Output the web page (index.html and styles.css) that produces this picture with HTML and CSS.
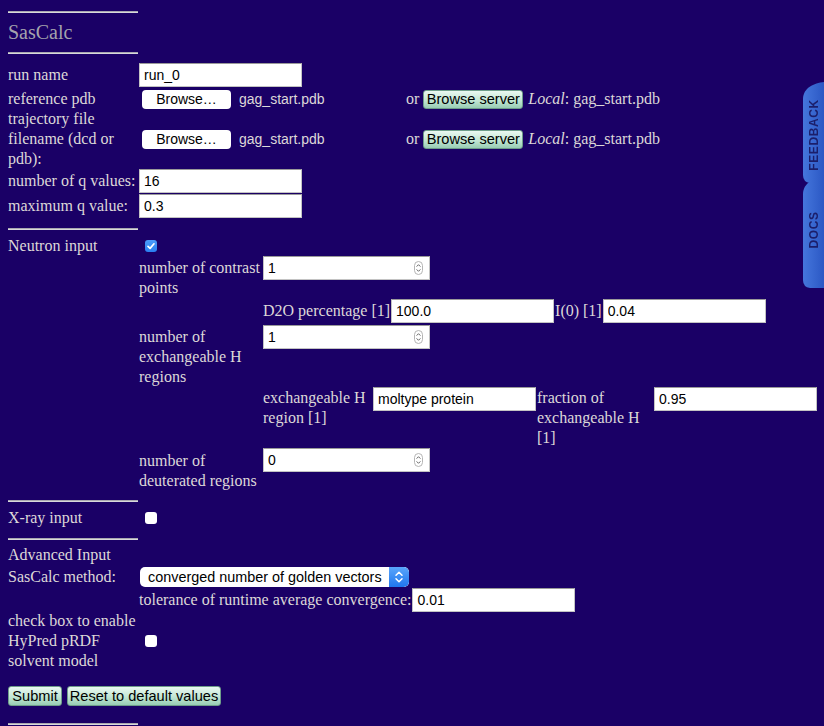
FILE: index.html
```html
<!DOCTYPE html>
<html lang="en">
<head>
<meta charset="utf-8">
<title>SasCalc</title>
<link rel="stylesheet" href="styles.css">
</head>
<body>
<div class="page">
  <div class="rule rule-top"></div>
  <div class="title">SasCalc</div>
  <div class="rule"></div>

  <form class="form">
    <div class="row row-field row-run">
      <span class="lbl">run name</span>
      <input class="field" type="text" value="run_0">
    </div>

    <div class="row row-ref">
      <span class="lbl">reference pdb</span>
      <div class="filebox">
        <div class="file"><span class="browse">Browse…</span><span class="fname">gag_start.pdb</span></div>
        <span class="or">or</span>
        <span class="gbtn server">Browse server</span>
        <span class="local"><i>Local</i>: gag_start.pdb</span>
      </div>
    </div>

    <div class="row row-traj">
      <span class="lbl">trajectory file filename (dcd or pdb):</span>
      <div class="filebox">
        <div class="file"><span class="browse">Browse…</span><span class="fname">gag_start.pdb</span></div>
        <span class="or">or</span>
        <span class="gbtn server">Browse server</span>
        <span class="local"><i>Local</i>: gag_start.pdb</span>
      </div>
    </div>

    <div class="row row-field">
      <span class="lbl">number of q values:</span>
      <input class="field" type="text" value="16">
    </div>
    <div class="row row-field">
      <span class="lbl">maximum q value:</span>
      <input class="field" type="text" value="0.3">
    </div>

    <div class="rule rule-neutron"></div>

    <div class="sect sect-neutron">
      <span class="lbl">Neutron input</span>
      <div class="sub">
        <div class="cbline"><span class="cb on"><svg width="12" height="12" viewBox="0 0 12 12"><path d="M3 6.3 L5.1 8.4 L9 3.8" fill="none" stroke="#fff" stroke-width="1.7" stroke-linecap="round" stroke-linejoin="round"/></svg></span></div>

        <div class="sub2 sub-contrast">
          <span class="lbl2">number of contrast points</span>
          <div class="spin"><input type="text" value="1"><svg class="spinner" width="9" height="14" viewBox="0 0 9 14"><rect x="0.5" y="0.5" width="8" height="13" rx="4" fill="#fff" stroke="#b4b4b4"/><path d="M2.6 5.6 L4.5 3.7 L6.4 5.6 M2.6 8.4 L4.5 10.3 L6.4 8.4" fill="none" stroke="#555" stroke-width="0.9"/></svg></div>
        </div>

        <div class="pair pair-d2o">
          <span class="plbl">D2O percentage [1]</span>
          <input class="field" type="text" value="100.0">
          <span class="plbl plbl-i0">I(0) [1]</span>
          <input class="field" type="text" value="0.04">
        </div>

        <div class="sub2 sub-exch">
          <span class="lbl2">number of exchangeable H regions</span>
          <div class="spin"><input type="text" value="1"><svg class="spinner" width="9" height="14" viewBox="0 0 9 14"><rect x="0.5" y="0.5" width="8" height="13" rx="4" fill="#fff" stroke="#b4b4b4"/><path d="M2.6 5.6 L4.5 3.7 L6.4 5.6 M2.6 8.4 L4.5 10.3 L6.4 8.4" fill="none" stroke="#555" stroke-width="0.9"/></svg></div>
        </div>

        <div class="quad">
          <span class="qlbl">exchangeable H region [1]</span>
          <input class="field" type="text" value="moltype protein">
          <span class="qlbl qlbl-frac">fraction of exchangeable H [1]</span>
          <input class="field" type="text" value="0.95">
        </div>

        <div class="sub2 sub-deut">
          <span class="lbl2">number of deuterated regions</span>
          <div class="spin"><input type="text" value="0"><svg class="spinner" width="9" height="14" viewBox="0 0 9 14"><rect x="0.5" y="0.5" width="8" height="13" rx="4" fill="#fff" stroke="#b4b4b4"/><path d="M2.6 5.6 L4.5 3.7 L6.4 5.6 M2.6 8.4 L4.5 10.3 L6.4 8.4" fill="none" stroke="#555" stroke-width="0.9"/></svg></div>
        </div>
      </div>
    </div>

    <div class="rule rule-xray"></div>
    <div class="row row-xray">
      <span class="lbl">X-ray input</span>
      <span class="cb off"></span>
    </div>
    <div class="rule rule-adv"></div>

    <div class="adv-title">Advanced Input</div>
    <div class="row row-method">
      <span class="lbl">SasCalc method:</span>
      <div class="select">
        <span class="sel-text">converged number of golden vectors</span>
        <span class="sel-arrow"><svg width="20" height="20" viewBox="0 0 20 20"><path d="M7 8.2 L10 5.2 L13 8.2 M7 11.8 L10 14.8 L13 11.8" fill="none" stroke="#fff" stroke-width="1.5" stroke-linecap="round" stroke-linejoin="round"/></svg></span>
      </div>
    </div>
    <div class="tol">
      <span class="tol-lbl">tolerance of runtime average convergence:</span>
      <input class="field" type="text" value="0.01">
    </div>
    <div class="row row-hypred">
      <span class="lbl">check box to enable HyPred pRDF solvent model</span>
      <span class="cb off"></span>
    </div>

    <div class="actions">
      <span class="gbtn submit">Submit</span>
      <span class="gbtn reset">Reset to default values</span>
    </div>
  </form>
  <div class="rule rule-bottom"></div>
</div>

<div class="tabs">
  <svg width="22" height="210" viewBox="0 0 22 210">
    <defs>
      <linearGradient id="tabg" x1="0" y1="0" x2="1" y2="0">
        <stop offset="0" stop-color="#4576dc"/>
        <stop offset="1" stop-color="#2b58c4"/>
      </linearGradient>
    </defs>
    <path d="M22 0 C12 1 1 6 1 17 L1 93 Q1 100 8 101 L22 101 Z" fill="url(#tabg)"/>
    <path d="M22 95 C12 96 1 101 1 112 L1 198 Q1 205 8 206 L22 206 Z" fill="url(#tabg)"/>
    <text class="tabtext" transform="translate(16 53) rotate(-90)" text-anchor="middle">FEEDBACK</text>
    <text class="tabtext" transform="translate(16 148) rotate(-90)" text-anchor="middle">DOCS</text>
  </svg>
</div>
</body>
</html>
```

FILE: styles.css
```css
html, body {
  margin: 0;
  padding: 0;
  overflow: hidden;
}

body {
  background: #1a0066;
  color: #ddd8d8;
  font-family: "Liberation Serif", "Times New Roman", serif;
  font-size: 16px;
  line-height: 20px;
}

.page {
  padding: 8px 8px 0 8px;
}

.rule {
  width: 130px;
  height: 0;
  border-top: 1px solid #a8a8b0;
  border-bottom: 1px solid #d8d8dc;
}

.rule-top { margin-top: 3px; }

.title {
  height: 39px;
  line-height: 39px;
  font-size: 20px;
  color: #a4a3ad;
}

.form {
  margin: 0;
  padding-top: 9px;
}

.row {
  display: grid;
  grid-template-columns: 131px auto;
  align-items: center;
}

.row-field { height: 25px; align-items: start; }
.row-field .lbl { padding-top: 2px; }

.field {
  box-sizing: border-box;
  width: 163px;
  height: 24px;
  margin: 0;
  border: 1px solid #c3c3c3;
  border-top-color: #9a9a9a;
  background: #fff;
  padding: 0 4px;
  font-family: "Liberation Sans", Arial, sans-serif;
  font-size: 14px;
  color: #000;
  outline: none;
}

.row-ref { height: 20px; margin-top: 1px; }
.row-traj { height: 60px; }

.filebox {
  display: flex;
  align-items: center;
  white-space: nowrap;
}

.file {
  width: 264px;
  margin-left: 3px;
  display: flex;
  align-items: center;
}

.browse {
  box-sizing: border-box;
  width: 89px;
  height: 19px;
  line-height: 19px;
  text-align: center;
  background: #fff;
  border-radius: 4px;
  color: #000;
  font-family: "Liberation Sans", Arial, sans-serif;
  font-size: 14px;
}

.fname {
  margin-left: 8px;
  font-family: "Liberation Sans", Arial, sans-serif;
  font-size: 14px;
  color: #ddd8d8;
}

.or { margin-right: 4px; }

.gbtn {
  box-sizing: border-box;
  display: inline-block;
  height: 19px;
  line-height: 17px;
  text-align: center;
  color: #000;
  font-family: "Liberation Sans", Arial, sans-serif;
  font-size: 14.6px;
  background: linear-gradient(#eaf8f1, #c2e6d4 55%, #98cdb4);
  border: 1px solid #6e9d8a;
  border-radius: 3px;
}

.server { width: 100px; }

.local { margin-left: 5px; }

.rule-neutron { margin-top: 9px; }

.sect {
  display: grid;
  grid-template-columns: 131px auto;
  align-items: start;
  margin-top: 6px;
}

.cbline {
  height: 20px;
  display: flex;
  align-items: center;
}

.cb {
  box-sizing: border-box;
  display: inline-block;
  width: 12px;
  height: 12px;
  margin-left: 6px;
  border-radius: 3px;
}

.cb svg { display: block; }

.cb.on {
  background: linear-gradient(#4b9bfa, #2a7ff0);
}

.cb.off {
  background: #fff;
}

.sub2 {
  display: grid;
  grid-template-columns: 124px 167px;
  align-items: start;
}

.lbl2 { padding-top: 2px; }

.sub-contrast { height: 43px; }
.sub-exch { height: 62px; margin-top: 2px; }
.sub-deut { height: 43px; }
.sub-deut .lbl2 { padding-top: 3px; }

.spin {
  box-sizing: border-box;
  width: 167px;
  height: 24px;
  display: flex;
  align-items: center;
  background: #fff;
  border: 1px solid #c3c3c3;
  border-top-color: #9a9a9a;
  padding: 0 6px 0 0;
}

.spin input {
  flex: 1;
  min-width: 0;
  border: 0;
  margin: 0;
  padding: 0 4px;
  height: 20px;
  background: transparent;
  font-family: "Liberation Sans", Arial, sans-serif;
  font-size: 14px;
  color: #000;
  outline: none;
}

.spinner { display: block; }

.pair {
  display: flex;
  align-items: center;
  margin-left: 124px;
  height: 24px;
  white-space: nowrap;
}

.pair .field { margin-left: 1px; }

.plbl-i0 { margin-left: 1px; }
.pair .plbl-i0 + .field { margin-left: 1px; }

.quad {
  display: grid;
  grid-template-columns: 110px 164px 117px 163px;
  align-items: start;
  margin-left: 124px;
  height: 61px;
}

.qlbl { padding-top: 1px; }

.rule-xray { margin-top: 9px; }

.row-xray { height: 20px; margin-top: 6px; }

.rule-adv { margin-top: 10px; }

.adv-title { margin-top: 5px; height: 20px; }

.row-method { height: 21px; margin-top: 1px; }

.select {
  box-sizing: border-box;
  width: 269px;
  height: 20px;
  margin-left: 1px;
  display: flex;
  align-items: center;
  background: #fff;
  border-radius: 5px;
  overflow: hidden;
  font-family: "Liberation Sans", Arial, sans-serif;
  font-size: 14.4px;
  color: #000;
}

.sel-text {
  flex: 1;
  padding-left: 8px;
  white-space: nowrap;
}

.sel-arrow {
  width: 20px;
  height: 20px;
  background: linear-gradient(#5aa6fb, #1f76ee);
  border-radius: 0 5px 5px 0;
}

.sel-arrow svg { display: block; }

.tol {
  display: flex;
  align-items: center;
  margin-left: 131px;
  height: 25px;
  white-space: nowrap;
}

.tol .field { margin-left: 1px; }

.row-hypred { height: 60px; margin-top: -1px; }

.actions {
  display: flex;
  gap: 5px;
  margin-top: 15px;
}

.actions .gbtn {
  height: 20px;
  line-height: 18px;
}

.submit { width: 54px; }
.reset { width: 154px; }

.rule-bottom { margin-top: 17px; }

.tabs {
  position: fixed;
  right: 0;
  top: 82px;
  width: 22px;
  height: 210px;
}

.tabs svg { display: block; }

.tabtext {
  font-family: "Liberation Sans", Arial, sans-serif;
  font-weight: bold;
  font-size: 12px;
  letter-spacing: 0.6px;
  fill: #1b1e6a;
}
```
